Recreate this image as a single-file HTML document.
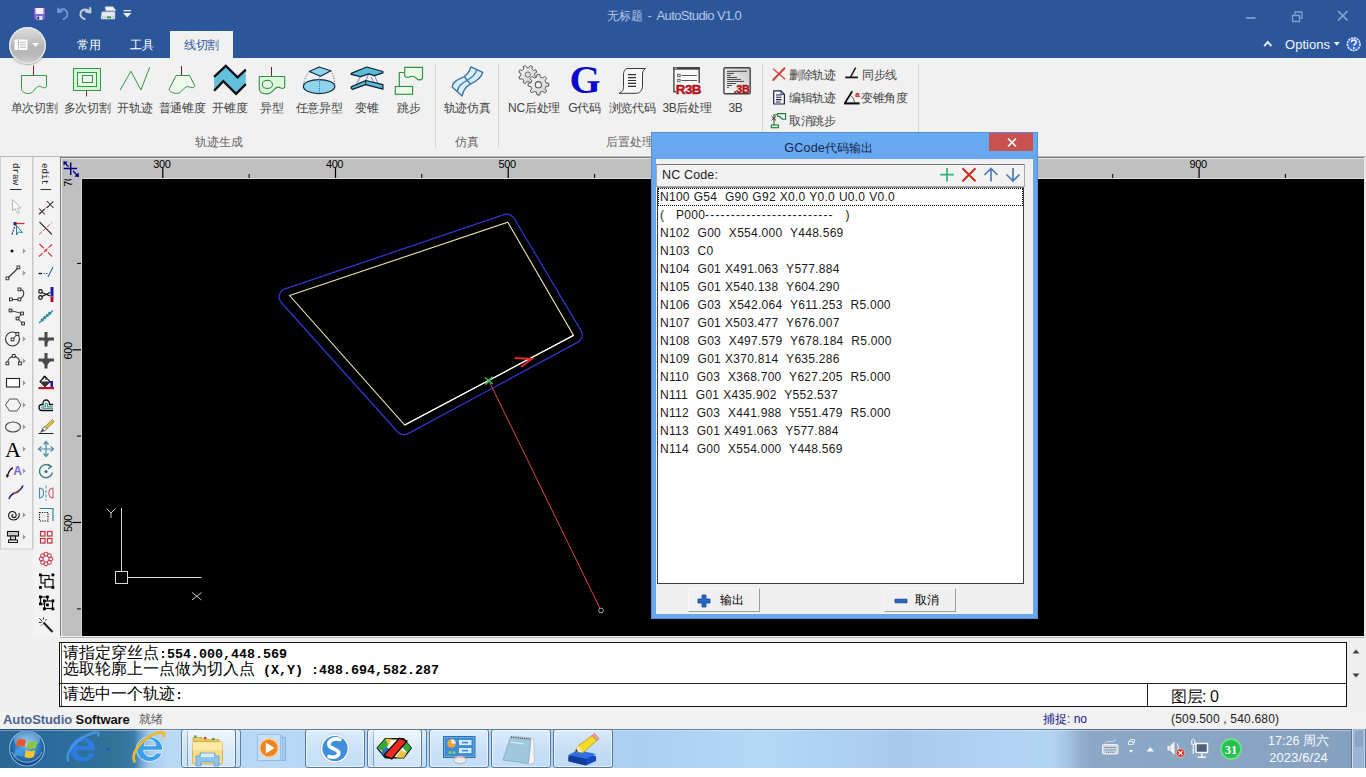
<!DOCTYPE html>
<html lang="zh">
<head>
<meta charset="utf-8">
<title>AutoStudio V1.0</title>
<style>
*{box-sizing:border-box;margin:0;padding:0}
html,body{width:1366px;height:777px;overflow:hidden;background:#fff}
body{font-family:"Liberation Sans",sans-serif;font-size:12px;color:#444;position:relative}
.abs{position:absolute}
#titlebar{left:0;top:0;width:1366px;height:58px;background:#2b579a}
#ribbon{left:0;top:58px;width:1366px;height:98px;background:#f1f1f1}
#ribbonline{left:0;top:156px;width:1366px;height:1px;background:#b8b8b8}
.tab{position:absolute;top:31px;height:27px;line-height:29px;font-size:12px;letter-spacing:-0.4px;color:#fff;text-align:center}
.tab.act{background:#f1f1f1;color:#2b579a}
.big{position:absolute;text-align:center;font-size:12px;color:#444;white-space:nowrap;transform:translateX(-50%);line-height:16px;letter-spacing:-0.3px}
.big svg{display:block;margin:0 auto;width:34px;height:34px}
.big span{display:block;margin-top:1px;line-height:16px;letter-spacing:-0.3px}
.grp{position:absolute;top:134px;font-size:12px;color:#666;transform:translateX(-50%);white-space:nowrap;line-height:16px}
.sep{position:absolute;top:64px;width:1px;height:84px;background:#d6d6d6}
.sm{position:absolute;font-size:12px;color:#444;white-space:nowrap;line-height:16px;letter-spacing:-0.3px}
#lefttb{left:0;top:157px;width:60px;height:551px;background:#f0f0f0}
#canvas{left:82px;top:179px;width:1282px;height:457px;background:#000}
#hruler{left:62px;top:159px;width:1302px;height:20px;background:#c0c0c0}
#vruler{left:62px;top:159px;width:20px;height:477px;background:#c0c0c0}
.rt{position:absolute;font-size:11px;color:#000;line-height:12px}
#cmd{left:59px;top:642px;width:1288px;height:65px;background:#fff;border:1px solid #111}
.cl{position:absolute;left:3px;font-size:16px;line-height:16px;color:#000;white-space:nowrap;height:17px}
.jw{display:inline-block;vertical-align:top;text-align:justify;text-align-last:justify;text-justify:inter-character;white-space:nowrap;overflow:visible}
.cl b{font-family:"Liberation Mono",monospace;font-size:13.330px;font-weight:bold;letter-spacing:0;vertical-align:0.500px}
#status{left:0;top:708px;width:1366px;height:21px;background:#f1f1f1}
#taskbar{left:0;top:729px;width:1366px;height:39px}
#dlg{left:651px;top:132px;width:387px;height:487px;background:#68a8ee;box-shadow:0 0 0 1px rgba(70,120,190,.5) inset}
.li{height:18px;line-height:18px;letter-spacing:0.27px;word-spacing:0.3px}
.btn{position:absolute;width:72px;height:24px;background:#f0f0f0;border:1px solid #f8f8f8;border-right-color:#9d9d9d;border-bottom-color:#9d9d9d}
.btn span{position:absolute;top:4px;font-size:12px;line-height:15px;color:#000;white-space:nowrap}
</style>
</head>
<body>
<div id="titlebar" class="abs">
<!-- quick access -->
<svg class="abs" style="left:32px;top:5px" width="104" height="18" viewBox="0 0 104 18">
 <g>
  <rect x="1.5" y="2.5" width="12" height="12" fill="#7868cc" stroke="#4a3f9e"/>
  <rect x="3.5" y="3" width="8" height="6" fill="#eef0ff"/>
  <rect x="4.5" y="11" width="6" height="4" fill="#d9dcf5"/>
  <rect x="5.2" y="11.6" width="2" height="3" fill="#3b2f86"/>
 </g>
 <path d="M26 7.200 l0.300 -3.800 M26 7.200 l4 -0.800 M26.300 6.800 c2.300 -3.600 7.300 -3.400 8.800 .3 c1.200 3.200 -.8 5.800 -3.600 7" fill="none" stroke="#6f9bd6" stroke-width="1.700" stroke-linecap="round"/>
 <path d="M58.500 7.500 l-.3 -4.500 M58.500 7.500 l-4.800 -1 M57.800 6.800 c-2.300 -3.300 -7.600 -3.200 -9 .5 c-1.200 3.200 .8 5.600 3.800 6.700" fill="none" stroke="#c4ccd8" stroke-width="2" stroke-linecap="round"/>
 <g transform="translate(-1,-1.200)">
  <path d="M74 3 l8 0 l3 4 l-10 0 z" fill="#f4f6fa" stroke="#b8c2d6" stroke-width=".6"/>
  <path d="M71 8 l13 0 l0 6 l-14 0 z" fill="#e8ebf2" stroke="#aab3c6" stroke-width=".6"/>
  <path d="M70 12 l14 0 l0 3.5 l-14 0 z" fill="#cfd5e2"/>
  <rect x="76" y="12.5" width="4" height="2" fill="#2db34a"/>
 </g>
 <path d="M91.500 5.700 l7.500 0" stroke="#e9eef8" stroke-width="1.300"/><path d="M91 8 l8.500 0 l-4.250 4.600 z" fill="#e9eef8"/>
</svg>
<div class="abs" style="left:607px;top:7px;font-size:12px;line-height:18px;color:#b4c6e6;white-space:nowrap"><span class="jw" style="width:36px;height:18px">无标题</span><span style="display:inline-block;width:13.500px;text-align:center;vertical-align:top">-</span><span style="font-size:13px;letter-spacing:-0.62px">AutoStudio V1.0</span></div>
<!-- window controls -->
<svg class="abs" style="left:1240px;top:6px" width="116" height="20" viewBox="0 0 116 20">
 <path d="M6 12 l9.5 0" stroke="#86a7d8" stroke-width="1.6"/>
 <path d="M52.5 9.5 l7 0 l0 6 l-7 0 z M55 9 l0 -3 l7 0 l0 6 l-2.5 0" fill="none" stroke="#7d9fd2" stroke-width="1.3"/>
 <path d="M98 5 l9.5 9.5 M107.5 5 l-9.5 9.5" stroke="#86a7d8" stroke-width="1.7"/>
</svg>
<svg class="abs" style="left:1262px;top:38px" width="12" height="12" viewBox="0 0 12 12"><path d="M2.2 8 l3.6 -4 l3.6 4" fill="none" stroke="#dfe7f4" stroke-width="2"/></svg>
<div class="abs" style="left:1285px;top:37px;font-size:13px;line-height:16px;color:#f2f5fb;letter-spacing:0.05px">Options</div>
<svg class="abs" style="left:1333px;top:40px" width="8" height="8" viewBox="0 0 8 8"><path d="M0.8 2 l6 0 l-3 3.8 z" fill="#eef2fa"/></svg>
<svg class="abs" style="left:1345px;top:36px" width="18" height="17" viewBox="0 0 18 17">
 <circle cx="8.7" cy="8.2" r="6.3" fill="#3a66c9" stroke="#d8e6fa" stroke-width="1.6" stroke-dasharray="2.2 .7"/>
 <path d="M6.4 6.3 c0 -3 4.8 -3 4.8 -0.2 c0 1.8 -2.3 1.8 -2.3 3.7" fill="none" stroke="#fff" stroke-width="1.5"/><circle cx="8.9" cy="12" r="0.95" fill="#fff"/>
</svg>
<div class="tab" style="left:70px;width:38px">常用</div>
<div class="tab" style="left:123px;width:38px">工具</div>
<div class="tab act" style="left:170px;width:63px">线切割</div>
</div>
<div id="ribbon" class="abs"></div>
<div id="ribbonline" class="abs"></div>
<div id="rb" class="abs" style="left:0;top:0;width:1366px;height:156px">
<!-- app button -->
<div class="abs" style="left:9px;top:27px;width:37px;height:37px;border-radius:50%;background:linear-gradient(#dcdcdc 0%,#c9c9c9 30%,#b4b4b4 55%,#b9b9b9 75%,#d0d0d0 100%);box-shadow:0 1px 2px rgba(0,0,0,.3), inset 0 0 0 1.500px rgba(226,232,240,.9)"></div>
<svg class="abs" style="left:13px;top:38px" width="30" height="14" viewBox="0 0 30 14">
 <rect x="1.5" y="1.5" width="13" height="10.5" rx="1" fill="#fff" opacity=".95"/>
 <path d="M5.5 2 l0 9.5 M7 4.3 l6 0 M7 6.8 l6 0 M7 9.3 l6 0" stroke="#bdbdbd" stroke-width="1"/>
 <path d="M19 5 l7 0 l-3.5 4 z" fill="#f6f6f6"/>
</svg>

<svg class="abs" style="left:0;top:58px" width="930" height="98" viewBox="0 58 930 98">
<!-- 1 single cut -->
<path d="M33.500 65.500 L33.500 75.500" stroke="#9c1a2a" stroke-width="1"/>
<path d="M21.500 75.500 L46.500 75.500 L46.500 86.600 C45 88.300 43 88.200 41.500 87 C39.800 85.600 37.800 86 36 88 C33.500 91 32 93.500 28.600 93.500 C24.500 93.500 21.500 91.500 21.500 88.500 Z" fill="none" stroke="#319848" stroke-width="1"/>
<!-- 2 multi cut -->
<rect x="73.500" y="68.500" width="27" height="22" fill="#d6f8d6" stroke="#319848"/>
<rect x="77.500" y="72.500" width="19" height="14" fill="#e6fbe6" stroke="#319848"/>
<rect x="82.500" y="75.500" width="10" height="7" fill="#f1f1f1" stroke="#319848"/>
<path d="M86.500 91 L86.500 96.500" stroke="#9c1a2a"/>
<!-- 3 open path -->
<path d="M120.2 90 L130.9 71.2 L140.9 90 L149.7 67.2" fill="none" stroke="#319848" stroke-width="1"/>
<!-- 4 taper -->
<path d="M181.500 66 L181.500 75.500" stroke="#6a2428"/>
<path d="M176.100 75.500 L189.500 75.500 L194.600 85.300 C194.800 87.800 192.500 88.200 190.500 87.300 C188.300 86.200 186.500 86.300 184.500 88 C181.800 90.500 180.500 93.400 176.800 93.400 C172.500 93.400 169 91.300 169.300 88.800 Z" fill="#eefcee" stroke="#3a8a4a" stroke-width="1"/>
<!-- 5 open taper -->
<path d="M214.100 76.900 L225.800 65.600 L237.600 77.400 L245.800 69.700 L245.800 84.100 L236.100 93.800 L223.300 81 L214.100 90.700 Z" fill="#62c0dc"/>
<path d="M214.100 76.900 L225.800 65.800 L237.600 77.400 L245.800 69.700" fill="none" stroke="#0c0c10" stroke-width="2.300" stroke-linejoin="miter"/>
<path d="M214.100 90.700 L223.300 81.200 L236.100 93.800 L245.800 84.100" fill="none" stroke="#0c0c10" stroke-width="2.300"/>
<!-- 6 special -->
<path d="M271.500 67 L271.500 76" stroke="#6a2428"/>
<path d="M259.300 76.500 L284.700 76.500 L284.700 87 C283.800 88.800 281.800 88.900 280.300 87.800 C278.500 86.600 276.500 87 274.500 89.200 C272 92 270.500 93.900 267 93.900 C262.500 93.900 259.300 92 259.300 89 Z" fill="#dcf9dc" stroke="#3a8a4a" stroke-width="1.100"/>
<ellipse cx="267.400" cy="84.400" rx="5.100" ry="4" fill="#e8fbe8" stroke="#3a8a4a" stroke-width="1.100"/>
<!-- 7 any special -->
<ellipse cx="319.100" cy="86.500" rx="15.700" ry="7" fill="#8fd4ec" stroke="#0e2c44" stroke-width="1.250"/>
<path d="M309.300 71.500 L319.100 67 L330.900 70.800 L320.600 76.200 Z" fill="#8fd4ec" stroke="#0e2c44" stroke-width="1.200" stroke-linejoin="round"/>
<path d="M309.300 71.500 C306 75.500 304.200 80 303.600 84 M330.900 70.800 C333.500 75 334.600 80 334.800 84" fill="none" stroke="#3a4a5a" stroke-width=".9" stroke-dasharray="1 1.600"/>
<path d="M319.500 76.500 L319.500 93.500" fill="none" stroke="#2f62c0" stroke-width=".9" stroke-dasharray="1.200 1.100"/>
<!-- 8 var taper -->
<path d="M356.500 83.600 L360.600 76.400 M365.700 80.500 L368.800 73.800 M374.400 75.400 L378 83.400 M371 77 L374 82.500" stroke="#5a5ac8" stroke-width=".8"/>
<path d="M351.200 73.300 L366.700 67 L382.900 71.500 L382.900 72.800 L374.400 75.600 L368.800 73.900 L360.600 76.600 L351.200 74.400 Z" fill="#5bbcd8" stroke="#0c2230" stroke-width="1.250" stroke-linejoin="round"/>
<path d="M351.200 86.900 L365.700 80.500 L382.900 84.600 L382.900 89.200 L365.700 84.700 L352.400 89.300 L351.200 88.300 Z" fill="#5bbcd8" stroke="#0c2230" stroke-width="1.250" stroke-linejoin="round"/>
<path d="M365.700 80.500 L365.700 84.700" stroke="#0c2230" stroke-width="1"/>
<!-- 9 jump -->
<path d="M404.700 67.400 L422.500 67.400 L422.500 78.500 C420.800 80.300 418.300 80.300 416.500 78.500 C414.500 76.300 412 75.800 409.800 76.800 C407.500 77.800 404.700 77.500 404.700 75.500 Z" fill="#eafbea" stroke="#2f9240" stroke-width="1.150" stroke-linejoin="round"/>
<path d="M404.700 72.500 L399.300 72.500 L399.300 86.500" fill="none" stroke="#2f9240" stroke-width="1.150"/>
<rect x="395.300" y="86.500" width="17.300" height="7.800" fill="#eafbea" stroke="#2f9240" stroke-width="1.150"/>
<!-- 10 simulate -->
<path d="M452.400 87.300 C452 81 460 79 464.200 76.500 C468 74 469.500 71 470.900 66.900 L482.700 72.400 C481.500 77.500 477 81 470.400 84.200 C465 87 463 91 462.100 96 Z" fill="#d4f1fd" stroke="#44719f" stroke-width="1.400" stroke-linejoin="round"/>
<path d="M476.800 69.600 C475.500 74.500 472 77.500 467.300 80.300 C461.500 83.500 458 86 457.300 91.600 M464.200 76.500 L470.400 84.200" fill="none" stroke="#44719f" stroke-width="1.300"/>
<!-- 11 gears -->
<defs><linearGradient id="gg" x1="0" y1="0" x2="1" y2="1"><stop offset="0" stop-color="#fafafa"/><stop offset="1" stop-color="#cfcfcf"/></linearGradient></defs>
<path d="M534.62 75.68 L536.79 76.98 L535.84 79.27 L533.38 78.66 L531.86 80.18 L532.47 82.64 L530.18 83.59 L528.88 81.42 L526.72 81.42 L525.42 83.59 L523.13 82.64 L523.74 80.18 L522.22 78.66 L519.76 79.27 L518.81 76.98 L520.98 75.68 L520.98 73.52 L518.81 72.22 L519.76 69.93 L522.22 70.54 L523.74 69.02 L523.13 66.56 L525.42 65.61 L526.72 67.78 L528.88 67.78 L530.18 65.61 L532.47 66.56 L531.86 69.02 L533.38 70.54 L535.84 69.93 L536.79 72.22 L534.62 73.52 Z" fill="url(#gg)" stroke="#5c5c5c" stroke-width="1" stroke-linejoin="round"/>
<circle cx="527.800" cy="74.600" r="2.600" fill="#e4e4e4" stroke="#6a6a6a" stroke-width="1"/>
<path d="M545.98 82.88 L548.71 83.32 L548.71 86.08 L545.98 86.52 L545.05 88.78 L546.67 91.01 L544.71 92.97 L542.48 91.35 L540.22 92.28 L539.78 95.01 L537.02 95.01 L536.58 92.28 L534.32 91.35 L532.09 92.97 L530.13 91.01 L531.75 88.78 L530.82 86.52 L528.09 86.08 L528.09 83.32 L530.82 82.88 L531.75 80.62 L530.13 78.39 L532.09 76.43 L534.32 78.05 L536.58 77.12 L537.02 74.39 L539.78 74.39 L540.22 77.12 L542.48 78.05 L544.71 76.43 L546.67 78.39 L545.05 80.62 Z" fill="url(#gg)" stroke="#555" stroke-width="1" stroke-linejoin="round"/>
<circle cx="538.400" cy="84.700" r="3.100" fill="#f4f4f4" stroke="#5a5a5a" stroke-width="1.100"/>
<!-- 12 G -->
<text x="585" y="93.300" font-family="Liberation Serif" font-weight="bold" font-size="40" fill="#0a0acd" text-anchor="middle">G</text>
<!-- 13 scroll -->
<path d="M628 68.5 L645.5 68.5 C643 70 642.5 72 642.5 75 L642.5 86 C642.5 90 640 93.3 636 93.3 L619 93.3 C622.5 92 623.5 90 623.5 86.5 L623.5 75 C623.5 71 625 68.5 628 68.5 Z" fill="#f8f8f8" stroke="#3a3a3a" stroke-width="1"/>
<path d="M628 74.600 L636 74.600 M628 77.600 L636 77.600 M628 80.500 L636 80.500 M628 83.400 L636 83.400 M628 86.300 L636 86.300" stroke="#333" stroke-width="1.200"/>
<!-- 14 R3B -->
<defs><linearGradient id="g3b" x1="1" y1="0" x2="0" y2="1"><stop offset="0" stop-color="#c4c4c4"/><stop offset=".55" stop-color="#e6e6e6"/><stop offset="1" stop-color="#fbfbfb"/></linearGradient></defs>
<path d="M673.900 91.800 L673.900 67.800 L699.200 67.800 L699.200 83" fill="#fafafa" stroke="#444" stroke-width="1.400"/>
<rect x="673.200" y="67.100" width="26.700" height="2.600" fill="#444"/>
<rect x="674.600" y="67.700" width="2.400" height="0.900" fill="#e8e8e8"/>
<rect x="677.700" y="74.300" width="2.400" height="2.400" fill="#fff" stroke="#555" stroke-width=".9"/><rect x="677.700" y="79.300" width="2.400" height="2.400" fill="#fff" stroke="#555" stroke-width=".9"/>
<path d="M681.500 75.500 L697 75.500 M681.500 80.500 L697 80.500" stroke="#5a5a5a" stroke-width="1.100"/>
<path d="M673.200 91.800 L676 91.800" stroke="#444" stroke-width="1.400"/>
<text x="688.400" y="93.700" font-weight="bold" font-size="13.400" fill="#b5141c" stroke="#b5141c" stroke-width=".5" text-anchor="middle" letter-spacing="-0.500">R3B</text>
<!-- 15 .3B -->
<rect x="723.900" y="67.800" width="26.300" height="26" rx="1.200" fill="url(#g3b)" stroke="#444" stroke-width="1.400"/>
<rect x="726.900" y="70.8" width="20" height="1.050" fill="#4a4a4a"/><rect x="726.900" y="72.9" width="7" height="1.050" fill="#4a4a4a"/><rect x="726.900" y="74.9" width="4" height="1.050" fill="#4a4a4a"/><rect x="726.900" y="76.9" width="10" height="1.050" fill="#4a4a4a"/><rect x="726.900" y="78.9" width="14" height="1.050" fill="#4a4a4a"/><rect x="726.900" y="80.9" width="17" height="1.050" fill="#4a4a4a"/><rect x="726.900" y="83.0" width="9" height="1.050" fill="#4a4a4a"/><rect x="726.900" y="85.0" width="5" height="1.050" fill="#4a4a4a"/><rect x="726.900" y="87.0" width="2" height="1.050" fill="#4a4a4a"/>
<text x="741.600" y="92.700" font-weight="bold" font-size="10.800" fill="#ae1019" stroke="#ae1019" stroke-width=".35" text-anchor="middle" letter-spacing="-0.300">.3B</text>
<!-- small icons -->
<path d="M784.500 68.300 L773.200 80" stroke="#c9473a" stroke-width="2" stroke-linecap="round"/><path d="M773 68.800 L785.300 79.300" stroke="#c9473a" stroke-width="1.200"/>
<path d="M845.200 77.400 L857.800 77.400" stroke="#151515" stroke-width="1.800"/><path d="M850.600 77 L855.600 67.600" stroke="#151515" stroke-width="1.500"/>
<path d="M773.700 90.900 L781 90.900 L784.400 94.300 L784.400 104 L773.700 104 Z" fill="#fbfaf0" stroke="#1c1c5c" stroke-width="1.200" stroke-linejoin="round"/>
<path d="M781 90.900 L781 94.300 L784.400 94.300" fill="none" stroke="#1c1c5c" stroke-width=".9"/>
<path d="M776 95 L781.500 95 M776 97.300 L781.500 97.300 M776 99.600 L781.500 99.600 M776 101.900 L780.500 101.900" stroke="#1c1c5c" stroke-width="1.050"/>
<path d="M844.100 103.400 L859.600 103.400" stroke="#0c0c0c" stroke-width="2.100"/><path d="M844.800 103.200 L852.200 91.200" stroke="#0c0c0c" stroke-width="1.700"/>
<path d="M850.500 95.500 C853.500 97.500 854.500 100 854.300 102.500" stroke="#333" stroke-width=".8" fill="none"/>
<text x="857.400" y="97" font-weight="bold" font-size="8" fill="#d22f25" stroke="#d22f25" stroke-width=".3" text-anchor="middle">a</text>
<path d="M777.600 113.600 L785.600 113.600 L785.600 119.200 L782.600 119.200 L779.200 116.200 L777.600 116.200 Z" fill="#eefaf0" stroke="#1f7a3a" stroke-width="1.150" stroke-linejoin="round"/>
<path d="M777.600 114.800 L774 114.800 L774 125" stroke="#1f7a3a" stroke-width="1.100" fill="none"/>
<rect x="771.400" y="125" width="7" height="2.700" fill="#eefaf0" stroke="#1f7a3a" stroke-width="1.100"/>
<path d="M771.600 116.300 L776 120.400 M776 116.300 L771.600 120.400" stroke="#3a1418" stroke-width=".9"/>
</svg>
<div class="big" style="left:34px;top:99px"><span class="jw" style="width:46.8px">单次切割</span></div>
<div class="big" style="left:87px;top:99px"><span class="jw" style="width:46.8px">多次切割</span></div>
<div class="big" style="left:135px;top:99px"><span class="jw" style="width:35.1px">开轨迹</span></div>
<div class="big" style="left:182px;top:99px"><span class="jw" style="width:46.8px">普通锥度</span></div>
<div class="big" style="left:230px;top:99px"><span class="jw" style="width:35.1px">开锥度</span></div>
<div class="big" style="left:272px;top:99px"><span class="jw" style="width:23.4px">异型</span></div>
<div class="big" style="left:319px;top:99px"><span class="jw" style="width:46.8px">任意异型</span></div>
<div class="big" style="left:367px;top:99px"><span class="jw" style="width:23.4px">变锥</span></div>
<div class="big" style="left:409px;top:99px"><span class="jw" style="width:23.4px">跳步</span></div>
<div class="big" style="left:467px;top:99px"><span class="jw" style="width:46.8px">轨迹仿真</span></div>
<div class="big" style="left:534px;top:100px">NC后处理</div>
<div class="big" style="left:584.500px;top:100px">G代码</div>
<div class="big" style="left:632px;top:99px"><span class="jw" style="width:46.8px">浏览代码</span></div>
<div class="big" style="left:687px;top:100px">3B后处理</div>
<div class="big" style="left:735.500px;top:100px">3B</div>
<div class="sep" style="left:435px"></div>
<div class="sep" style="left:498px"></div>
<div class="sep" style="left:762px"></div>
<div class="sep" style="left:918px"></div>
<div class="grp" style="left:218px"><span class="jw" style="width:46.8px">轨迹生成</span></div>
<div class="grp" style="left:467px"><span class="jw" style="width:23.4px">仿真</span></div>
<div class="grp" style="left:629px"><span class="jw" style="width:46.8px">后置处理</span></div>
<div class="sm" style="left:789px;top:67px"><span class="jw" style="width:46.8px">删除轨迹</span></div>
<div class="sm" style="left:862px;top:67px"><span class="jw" style="width:35.1px">同步线</span></div>
<div class="sm" style="left:789px;top:90px"><span class="jw" style="width:46.8px">编辑轨迹</span></div>
<div class="sm" style="left:861px;top:90px"><span class="jw" style="width:46.8px">变锥角度</span></div>
<div class="sm" style="left:789px;top:113px"><span class="jw" style="width:46.8px">取消跳步</span></div>
</div>
<div id="lefttb" class="abs"></div>
<svg class="abs" style="left:0;top:157px" width="60" height="482" viewBox="0 157 60 482" font-family="Liberation Mono, monospace">
<rect x="0" y="157" width="33" height="392" fill="#f3f3f3"/><rect x="0" y="157" width="1" height="392" fill="#d0d0d0"/><rect x="32" y="157" width="1.500" height="392" fill="#c9c9c9"/><rect x="0" y="548.500" width="33" height="1" fill="#cfcfcf"/>
<rect x="34" y="157" width="25.500" height="480" fill="#f3f3f3"/><rect x="34" y="636.500" width="26" height="1" fill="#cfcfcf"/>
<text transform="translate(12.500,163) rotate(90)" font-size="9.500" fill="#222" textLength="22" lengthAdjust="spacingAndGlyphs">draw</text>
<text transform="translate(42,163) rotate(90)" font-size="9.500" fill="#222" textLength="22" lengthAdjust="spacingAndGlyphs">edit</text>
<path d="M10 189.500 L21.500 189.500 M40.500 189.500 L51 189.500" stroke="#333" stroke-width="1"/>
<path d="M22.800 248.2 L25.800 251 L22.800 253.8 Z" fill="#9a9a9a"/>
<path d="M22.800 270.2 L25.800 273 L22.800 275.8 Z" fill="#9a9a9a"/>
<path d="M22.800 336.2 L25.800 339 L22.800 341.8 Z" fill="#9a9a9a"/>
<path d="M22.800 358.2 L25.800 361 L22.800 363.8 Z" fill="#9a9a9a"/>
<path d="M22.800 380.2 L25.800 383 L22.800 385.8 Z" fill="#9a9a9a"/>
<path d="M22.800 402.2 L25.800 405 L22.800 407.8 Z" fill="#9a9a9a"/>
<path d="M22.800 424.2 L25.800 427 L22.800 429.8 Z" fill="#9a9a9a"/>
<path d="M22.800 446.2 L25.800 449 L22.800 451.8 Z" fill="#9a9a9a"/>
<path d="M22.800 468.2 L25.800 471 L22.800 473.8 Z" fill="#9a9a9a"/>
<path d="M22.800 512.2 L25.800 515 L22.800 517.8 Z" fill="#9a9a9a"/>
<path d="M22.800 534.2 L25.800 537 L22.800 539.8 Z" fill="#9a9a9a"/>
<path d="M12.500 199.5 L12.500 211 L15 208.5 L17.500 213.5 L19.500 212.5 L17 208 L21 208 Z" fill="#fbfbfb" stroke="#b9b9b9" stroke-width="1"/>
<path d="M15 223.5 L24.500 223.5" stroke="#d83030" stroke-width="1.300"/><path d="M15.500 224 L12 234.5" stroke="#2a2a90" stroke-width="1.200" stroke-dasharray="2 1"/><rect x="13.500" y="222" width="3" height="3" fill="#2a2a90"/><path d="M16.500 225.5 L22.500 232.5 L18.500 232 L16.500 235 Z" fill="#e8f6f6" stroke="#2a8080" stroke-width="1"/>
<path d="M12 249.2 l1.800 1.800 l-1.800 1.800 l-1.800 -1.800 z" fill="#000"/>
<path d="M8 278 L18 268" stroke="#333" stroke-width="1.100"/><rect x="6" y="277" width="2.800" height="2.800" fill="#fff" stroke="#222" stroke-width=".9"/><rect x="17" y="266" width="2.800" height="2.800" fill="#fff" stroke="#222" stroke-width=".9"/>
<path d="M11 299.5 L19 299.5 C26 296 24.500 289 19.500 289.5" fill="none" stroke="#333" stroke-width="1.100"/><rect x="9.500" y="298" width="2.800" height="2.800" fill="#fff" stroke="#222" stroke-width=".9"/><rect x="18" y="298" width="2.800" height="2.800" fill="#fff" stroke="#222" stroke-width=".9"/><rect x="18" y="288" width="2.800" height="2.800" fill="#fff" stroke="#222" stroke-width=".9"/>
<path d="M10.500 310.5 L22 313.5 L17.500 318.5 L23 323.5" fill="none" stroke="#444" stroke-width="1"/>
<rect x="9.1" y="309.1" width="2.800" height="2.800" fill="#ddd" stroke="#222" stroke-width=".9"/>
<rect x="20.6" y="312.1" width="2.800" height="2.800" fill="#ddd" stroke="#222" stroke-width=".9"/>
<rect x="16.1" y="317.1" width="2.800" height="2.800" fill="#ddd" stroke="#222" stroke-width=".9"/>
<rect x="21.6" y="322.1" width="2.800" height="2.800" fill="#ddd" stroke="#222" stroke-width=".9"/>
<circle cx="12.500" cy="339" r="7" fill="none" stroke="#333" stroke-width="1.100"/><path d="M12.500 339.5 L17.500 334" stroke="#333" stroke-width="1"/><rect x="11.100" y="338.1" width="2.800" height="2.800" fill="#fff" stroke="#222" stroke-width=".9"/><rect x="16" y="332.5" width="2.800" height="2.800" fill="#fff" stroke="#222" stroke-width=".9"/>
<path d="M7.500 363.5 C8 354 19.500 354 20 363.5" fill="none" stroke="#333" stroke-width="1.200"/><rect x="6" y="362" width="2.800" height="2.800" fill="#fff" stroke="#222" stroke-width=".9"/><rect x="18.500" y="362" width="2.800" height="2.800" fill="#fff" stroke="#222" stroke-width=".9"/><rect x="12.300" y="354.5" width="2.800" height="2.800" fill="#fff" stroke="#222" stroke-width=".9"/>
<rect x="6.500" y="378.5" width="13" height="8.500" fill="#fff" stroke="#222" stroke-width="1.100"/>
<path d="M5.500 405 L9.500 399 L17 399 L21 405 L17 411 L9.500 411 Z" fill="none" stroke="#555" stroke-width="1"/>
<ellipse cx="13" cy="427" rx="7.500" ry="5" fill="none" stroke="#444" stroke-width="1.100"/>
<text x="13" y="456.5" font-family="Liberation Serif, serif" font-size="22" fill="#000" text-anchor="middle">A</text>
<text x="17.500" y="475" font-family="Liberation Sans, sans-serif" font-weight="bold" font-size="12" fill="#7a6ad0" text-anchor="middle">A</text><path d="M13 468 C9.500 468.5 8.500 473 7 476.5" fill="none" stroke="#111" stroke-width="1.300"/><path d="M5.800 474.5 L7 478 L9.300 475.5 Z" fill="#111"/>
<path d="M9 499 C12 489.500 18.500 496 23 485.500" fill="none" stroke="#1c1c8c" stroke-width="1.600"/><path d="M13.200 493.300 C15 492.800 16.500 492.800 18.500 492" fill="none" stroke="#d04040" stroke-width="1.600"/>
<path d="M13.500 515 c-1.500 -1 -2.500 1 -1 2 c2 1.500 4.500 -.5 3.500 -3 c-1 -3 -5.500 -3.500 -7 -.5 c-1.500 3.500 1 6.500 4.500 6.500 c4 0 6.500 -3.500 5.500 -7" fill="none" stroke="#111" stroke-width="1.100"/>
<rect x="7.500" y="531.5" width="11" height="4.500" fill="#ccc" stroke="#111" stroke-width="1.100"/><rect x="10.500" y="536" width="5" height="4" fill="#ccc" stroke="#111"/><rect x="8.500" y="540" width="9" height="2.500" fill="#eee" stroke="#111"/>
<path d="M38.500 214 L53 202" stroke="#d05050" stroke-width="1" stroke-dasharray="3 1.500"/><path d="M46.800 201 L53.600 208 M53.300 201.300 L47 207.800 M39 208.500 L45 214.500 M44.800 208.800 L39.300 214.300" stroke="#333" stroke-width="1.050"/>
<path d="M39 234.5 L52 222.5" stroke="#d05050" stroke-width="1" stroke-dasharray="4 1.500"/><path d="M39.500 222 L52 234.5" stroke="#333" stroke-width="1.100"/>
<path d="M39 256.5 L52 244.5" stroke="#d03030" stroke-width="1.100" stroke-dasharray="5 1.500"/><path d="M39.500 244 L52 256.5" stroke="#d03030" stroke-width="1.100" stroke-dasharray="6 1.500 3 1.500"/>
<path d="M38.500 273.5 L42 273.5" stroke="#111" stroke-width="1.300"/><path d="M43.500 273.5 L48 273.5" stroke="#2a7090" stroke-width="1" stroke-dasharray="1.500 1"/><path d="M48 277 L53 267" stroke="#2a7090" stroke-width="1.100"/>
<rect x="50.500" y="287" width="3" height="9.500" fill="#1a1ab0"/><rect x="50.500" y="296.5" width="3" height="5.500" fill="#b01030"/><circle cx="40.500" cy="291.5" r="1.800" fill="none" stroke="#111" stroke-width="1.200"/><circle cx="40.500" cy="297.5" r="1.800" fill="none" stroke="#111" stroke-width="1.200"/><path d="M42 292.5 L50 296 M42 296.5 L50 292.5" stroke="#111" stroke-width="1.300"/>
<path d="M39 323 L53 310.5" stroke="#2a8aa0" stroke-width="1.400"/><path d="M41.500 320.5 L51 312.2" stroke="#2a8aa0" stroke-width="3.200" stroke-dasharray="2 1.300"/>
<path d="M38.500 339 L54 339 M46 332 L46 346.5" stroke="#4a4a4a" stroke-width="3"/><path d="M46 340.5 L49.500 340.5 L46 344" fill="#4a4a4a"/>
<path d="M38.500 360 L54 360 M46 353 L46 368.5" stroke="#4a4a4a" stroke-width="3"/><path d="M41.500 361 L50.500 361 L46 366.5 Z" fill="#4a4a4a"/>
<rect x="38.500" y="387" width="15.500" height="2.200" fill="#c01028"/><path d="M49.500 381 L53 381 L53 387 L50.500 387 L50.500 383.5" fill="#1a1ab0"/><path d="M40 381.5 L45 376.5 L50 381.5 L45 386.5 Z" fill="#f5f5f5" stroke="#111" stroke-width="1.100"/><path d="M40 381.5 L50 381.5 L45 386.5 Z" fill="#333"/><path d="M43 379 C42.500 375 46.500 375 46 380" fill="none" stroke="#111" stroke-width="1"/>
<path d="M42 410.5 C38 410.5 38 404.5 42 404.5 L43 404.5 C42 398.5 50 398.5 49.500 404.5 L53 404.5 M53 410.5 L42 410.5" fill="none" stroke="#111" stroke-width="1.300"/><path d="M42.500 408 C41 408 41 406.8 42.500 406.8 L45.500 406.8 C44 401.5 48 401.5 47.500 406.8 L53 406.8 M53 408.3 L42.500 408.3" fill="none" stroke="#2a8a80" stroke-width="1"/>
<path d="M38.500 433.5 L53.500 433.5" stroke="#222" stroke-width="1"/><path d="M52.500 419.5 L54 422 L47 428.5 L45 426.5 Z" fill="#d8c040" stroke="#8a7a20" stroke-width=".7"/><path d="M45 426.5 L47 428.5 L44.500 431 L42 429 Z" fill="#e8e8e8" stroke="#555" stroke-width=".8"/><path d="M42 429 L44.500 431 L40 433 Z" fill="#555"/>
<path d="M46 442 L46 456 M39 449 L53 449" stroke="#4a8aa8" stroke-width="1.200"/><path d="M43.500 444.5 L46 441.5 L48.500 444.5 M43.500 453.5 L46 456.5 L48.500 453.5 M41.500 446.5 L38.500 449 L41.500 451.5 M50.500 446.5 L53.500 449 L50.500 451.5" fill="none" stroke="#4a8aa8" stroke-width="1.200"/>
<path d="M50.500 466.5 A6.500 6.500 0 1 0 52.300 472.5" fill="none" stroke="#3a7a80" stroke-width="1.300"/><path d="M47.500 464 L51.500 466.5 L48 469" fill="none" stroke="#3a7a80" stroke-width="1.200"/><circle cx="46" cy="471.5" r="1.500" fill="#2a6a70"/>
<path d="M46 485.5 L46 500.5" stroke="#4a90a8" stroke-width="1" stroke-dasharray="3 1.500"/><path d="M39.500 488 L39.500 498 C45 497.5 45 488.5 39.500 488 Z" fill="none" stroke="#4a90a8" stroke-width="1.100"/><path d="M53 488 L53 498 C47.500 497.5 47.500 488.5 53 488 Z" fill="none" stroke="#c06070" stroke-width="1.100"/>
<path d="M39.500 508.5 L53 508.5 L53 521" fill="none" stroke="#3a8a80" stroke-width="1.200"/><rect x="39.500" y="512.5" width="8.500" height="8.500" fill="none" stroke="#111" stroke-width="1.200" stroke-dasharray="1.200 1.200"/>
<rect x="40.5" y="531.5" width="4.500" height="4.500" fill="none" stroke="#c03040" stroke-width="1.200"/>
<rect x="47.5" y="531.5" width="4.500" height="4.500" fill="none" stroke="#c03040" stroke-width="1.200"/>
<rect x="40.5" y="538.5" width="4.500" height="4.500" fill="none" stroke="#c03040" stroke-width="1.200"/>
<rect x="47.5" y="538.5" width="4.500" height="4.500" fill="none" stroke="#c03040" stroke-width="1.200"/>
<circle cx="50.80" cy="559.00" r="2" fill="none" stroke="#c03040" stroke-width="1"/>
<circle cx="49.39" cy="562.39" r="2" fill="none" stroke="#c03040" stroke-width="1"/>
<circle cx="46.00" cy="563.80" r="2" fill="none" stroke="#c03040" stroke-width="1"/>
<circle cx="42.61" cy="562.39" r="2" fill="none" stroke="#c03040" stroke-width="1"/>
<circle cx="41.20" cy="559.00" r="2" fill="none" stroke="#c03040" stroke-width="1"/>
<circle cx="42.61" cy="555.61" r="2" fill="none" stroke="#c03040" stroke-width="1"/>
<circle cx="46.00" cy="554.20" r="2" fill="none" stroke="#c03040" stroke-width="1"/>
<circle cx="49.39" cy="555.61" r="2" fill="none" stroke="#c03040" stroke-width="1"/>
<rect x="41" y="575.5" width="8" height="7.500" fill="none" stroke="#111" stroke-width="1.200"/><rect x="45" y="579.5" width="8" height="7.500" fill="#f3f3f3" stroke="#111" stroke-width="1.200"/>
<rect x="39" y="573.5" width="2.800" height="2.800" fill="#000"/>
<rect x="51.5" y="573.5" width="2.800" height="2.800" fill="#000"/>
<rect x="39" y="586" width="2.800" height="2.800" fill="#000"/>
<rect x="51.5" y="586" width="2.800" height="2.800" fill="#000"/>
<rect x="40.500" y="597" width="7" height="7" fill="none" stroke="#111" stroke-width="1.200"/><rect x="44.500" y="601" width="8" height="7.500" fill="#f3f3f3" stroke="#111" stroke-width="1.200"/>
<rect x="39" y="595.5" width="2.800" height="2.800" fill="#000"/>
<rect x="46" y="595.5" width="2.800" height="2.800" fill="#000"/>
<rect x="39" y="602.5" width="2.800" height="2.800" fill="#000"/>
<rect x="46" y="603.5" width="2.800" height="2.800" fill="#000"/>
<rect x="43" y="599.5" width="2.800" height="2.800" fill="#000"/>
<rect x="51.5" y="599.5" width="2.800" height="2.800" fill="#000"/>
<rect x="43" y="607.5" width="2.800" height="2.800" fill="#000"/>
<rect x="51.5" y="607.5" width="2.800" height="2.800" fill="#000"/>
<path d="M43.500 622.5 L52.500 632" stroke="#222" stroke-width="2.200"/><path d="M39.500 618.5 L42.500 621.5 M43.500 617.5 L43.500 619.5 M39 622.5 L41.500 622.5 M46.500 619 L45.500 620.5 M41 625.5 L42 624.5" stroke="#222" stroke-width="1"/>
</svg>
<div id="hruler" class="abs"></div>
<div id="vruler" class="abs"></div>
<div id="canvas" class="abs"></div>
<svg class="abs" style="left:60px;top:157px" width="1306" height="481" viewBox="60 157 1306 481" font-family="Liberation Sans, sans-serif">
<rect x="60" y="157" width="1306" height="1" fill="#7c7c7c"/><rect x="60" y="157" width="1" height="480" fill="#7c7c7c"/>
<rect x="61" y="158" width="1305" height="1" fill="#e4e4e4"/><rect x="61" y="158" width="1" height="479" fill="#ececec"/>
<rect x="162.2" y="167.5" width="1.2" height="11.5" fill="#000"/>
<text x="161.8" y="168.3" font-size="11" text-anchor="middle" fill="#000" letter-spacing="-0.4">300</text>
<rect x="248.6" y="174" width="1" height="5" fill="#000"/>
<rect x="334.9" y="167.5" width="1.2" height="11.5" fill="#000"/>
<text x="334.5" y="168.3" font-size="11" text-anchor="middle" fill="#000" letter-spacing="-0.4">400</text>
<rect x="421.3" y="174" width="1" height="5" fill="#000"/>
<rect x="507.6" y="167.5" width="1.2" height="11.5" fill="#000"/>
<text x="507.2" y="168.3" font-size="11" text-anchor="middle" fill="#000" letter-spacing="-0.4">500</text>
<rect x="594.1" y="174" width="1" height="5" fill="#000"/>
<rect x="680.3" y="167.5" width="1.2" height="11.5" fill="#000"/>
<text x="679.9" y="168.3" font-size="11" text-anchor="middle" fill="#000" letter-spacing="-0.4">600</text>
<rect x="766.8" y="174" width="1" height="5" fill="#000"/>
<rect x="853.0" y="167.5" width="1.2" height="11.5" fill="#000"/>
<text x="852.6" y="168.3" font-size="11" text-anchor="middle" fill="#000" letter-spacing="-0.4">700</text>
<rect x="939.5" y="174" width="1" height="5" fill="#000"/>
<rect x="1025.8" y="167.5" width="1.2" height="11.5" fill="#000"/>
<text x="1025.4" y="168.3" font-size="11" text-anchor="middle" fill="#000" letter-spacing="-0.4">800</text>
<rect x="1112.2" y="174" width="1" height="5" fill="#000"/>
<rect x="1198.5" y="167.5" width="1.2" height="11.5" fill="#000"/>
<text x="1198.1" y="168.3" font-size="11" text-anchor="middle" fill="#000" letter-spacing="-0.4">900</text>
<rect x="1284.9" y="174" width="1" height="5" fill="#000"/>
<rect x="77" y="608.4" width="5" height="1" fill="#000"/>
<rect x="72.5" y="521.9" width="9.5" height="1.2" fill="#000"/>
<text transform="translate(72,523.5) rotate(-90)" font-size="11" text-anchor="middle" fill="#000" letter-spacing="-0.4">500</text>
<rect x="77" y="435.6" width="5" height="1" fill="#000"/>
<rect x="72.5" y="349.2" width="9.5" height="1.2" fill="#000"/>
<text transform="translate(72,350.8) rotate(-90)" font-size="11" text-anchor="middle" fill="#000" letter-spacing="-0.4">600</text>
<rect x="77" y="262.9" width="5" height="1" fill="#000"/>
<rect x="72.5" y="176.5" width="9.5" height="1.2" fill="#000"/>
<text transform="translate(72,178.1) rotate(-90)" font-size="11" text-anchor="middle" fill="#000" letter-spacing="-0.4">700</text>
<rect x="62" y="159" width="20" height="20" fill="#c0c0c0"/>
<path d="M70.700 162.500 L70.700 175 M63.700 168.600 L77 168.600" stroke="#000080" stroke-width="1.500"/><path d="M63.300 161.300 l4.300 0.400 l-3.900 3.900 z M79 177 l-4.600 -0.500 l4.100 -4.100 z" fill="#000080"/><path d="M64.800 162.800 L68.500 166.500 M73 171 L77.500 175.500" stroke="#000080" stroke-width="1.250"/><rect x="82" y="178" width="1282" height="1" fill="#d9d9d9"/><rect x="81" y="179" width="1" height="457" fill="#d9d9d9"/>
<path d="M492.8 388.0 L577.5 342.4 A8.64 8.64 0 0 0 580.9 330.3 L514.2 218.5 A8.64 8.64 0 0 0 504.0 214.7 L285.1 288.8 A8.64 8.64 0 0 0 281.4 302.8 L397.5 431.8 A8.64 8.64 0 0 0 408.0 433.6 Z" fill="none" stroke="#3434c8" stroke-width="1.3"/>
<path d="M507.8 222.2 L573.5 335.4 L404.7 425 L289.6 295.6 Z" fill="none" stroke="#e9e3b4" stroke-width="1.1"/>
<path d="M404.7 425 L573.5 335.4" fill="none" stroke="#ffffff" stroke-width="1.2"/>
<path d="M488.8 380.6 L601 610.5" stroke="#d84a40" stroke-width="1"/>
<circle cx="601" cy="610.5" r="2.4" fill="#000" stroke="#b9b9b9" stroke-width="0.9"/>
<path d="M485 377.500 L492.800 384 M485.500 384.500 L492.500 376.800" stroke="#3ec45a" stroke-width="1.5"/>
<path d="M514.500 358 L531.500 359 L521 367" fill="none" stroke="#e02828" stroke-width="2.2" stroke-linejoin="miter"/>
<path d="M121.500 508 L121.500 571.500 M128 577.500 L201.500 577.500" stroke="#d8d8d8" stroke-width="1"/><rect x="115.500" y="571.500" width="12" height="12" fill="none" stroke="#d8d8d8"/>
<path d="M106.500 508.500 L111 513 L115.500 508.500 M111 513 L111 518" fill="none" stroke="#c8c8c8" stroke-width="1"/>
<path d="M192 592.500 L201.500 600 M201.500 592.500 L192 600" fill="none" stroke="#c8c8c8" stroke-width="1"/>
</svg>
<div class="abs" style="left:0;top:636px;width:1366px;height:72px;background:#f0f0f0"></div>
<div class="abs" style="left:60px;top:637px;width:1306px;height:1px;background:#b4b4b4"></div>
<div class="abs" style="left:1364px;top:157px;width:2px;height:482px;background:#e9e9e9"></div>
<div id="cmd" class="abs">
 <div class="abs" style="left:1px;top:0;width:1px;height:63px;background:#555"></div>
 <div class="abs" style="left:0;top:40px;width:1286px;height:1px;background:#222"></div>
 <div class="abs" style="left:1087px;top:40px;width:1px;height:24px;background:#222"></div>
 <div class="cl" style="top:2px"><span class="jw" style="width:96px">请指定穿丝点</span><b>:554.000,448.569</b></div>
 <div class="cl" style="top:18px"><span class="jw" style="width:192px">选取轮廓上一点做为切入点</span><b>&nbsp;(X,Y)&nbsp;:488.694,582.287</b></div>
 <div class="cl" style="top:43px"><span class="jw" style="width:112px">请选中一个轨迹</span><b>:</b></div>
 <div class="abs" style="left:1111px;top:45px;font-size:16px;line-height:18px;color:#111;white-space:nowrap;letter-spacing:-0.5px">图层: 0</div>
</div>
<svg class="abs" style="left:1350px;top:646px" width="12" height="36" viewBox="0 0 12 36"><path d="M2.500 7.500 L6 3.500 L9.500 7.500 Z M2.500 27.500 L6 31.500 L9.500 27.500 Z" fill="#444"/></svg>
<div id="status" class="abs">
 <div class="abs" style="left:3px;top:3.500px;font-size:13px;font-weight:bold;line-height:16px;white-space:nowrap;color:#111;letter-spacing:-0.1px"><span style="color:#4a6491">AutoStudio</span> Software</div>
 <div class="abs" style="left:139px;top:3px;font-size:12px;line-height:16px;color:#555;white-space:nowrap">就绪</div>
 <div class="abs" style="left:1043px;top:3px;font-size:12px;line-height:16px;color:#14148c;white-space:nowrap">捕捉: no</div>
 <div class="abs" style="left:1171px;top:3px;font-size:12px;line-height:16px;color:#222;white-space:nowrap;letter-spacing:0.18px">(509.500 , 540.680)</div>
</div>
<div id="taskbar" class="abs">
 <div class="abs" style="left:0;top:0;width:1366px;height:39px;background:linear-gradient(90deg,#2a6797 0px,#2c6c9c 60px,#327399 118px,#3a7ba8 134px,#6fa3cf 141px,#a3c9ec 149px,#bad9f4 168px,#b8d8f5 230px,#b5d6f5 500px,#accef0 640px,#b5d8f7 760px,#a9caec 900px,#b1d2f2 1000px,#b3d5f4 1050px,#a6c5e4 1066px,#94b0cf 1080px,#8ca8c7 1092px,#8aa6c5 1200px,#88a3c1 1300px,#85a0be 1351px)"></div>
 <div class="abs" style="left:0;top:0;width:1366px;height:1px;background:rgba(40,60,90,.55)"></div>
 <div class="abs" style="left:0;top:1px;width:1366px;height:1px;background:rgba(255,255,255,.35)"></div>
<svg class="abs" style="left:0;top:0" width="1366" height="39" viewBox="0 729 1366 39" font-family="Liberation Sans, sans-serif">
<defs>
<radialGradient id="orb" cx="50%" cy="40%" r="60%"><stop offset="0" stop-color="#7fc0ee"/><stop offset=".55" stop-color="#2f7fc4"/><stop offset="1" stop-color="#123e74"/></radialGradient>
<linearGradient id="btn" x1="0" y1="0" x2="0" y2="1"><stop offset="0" stop-color="#ffffff" stop-opacity=".55"/><stop offset=".5" stop-color="#ffffff" stop-opacity=".28"/><stop offset="1" stop-color="#ffffff" stop-opacity=".18"/></linearGradient>
</defs>
<rect x="187.5" y="729.500" width="53" height="38" rx="2.500" fill="url(#btn)" stroke="#5f7f9f" stroke-width="1"/><rect x="181.5" y="729.500" width="54.0" height="38" rx="2.500" fill="url(#btn)" stroke="#587896" stroke-width="1"/><rect x="182.5" y="730.500" width="52.0" height="36" rx="2" fill="none" stroke="#ffffff" stroke-opacity=".55" stroke-width="1"/>
<rect x="305.5" y="729.500" width="59.0" height="38" rx="2.500" fill="url(#btn)" stroke="#587896" stroke-width="1"/><rect x="306.5" y="730.500" width="57.0" height="36" rx="2" fill="none" stroke="#ffffff" stroke-opacity=".55" stroke-width="1"/>
<rect x="373.5" y="729.500" width="53" height="38" rx="2.500" fill="url(#btn)" stroke="#5f7f9f" stroke-width="1"/><rect x="367.5" y="729.500" width="54.0" height="38" rx="2.500" fill="url(#btn)" stroke="#587896" stroke-width="1"/><rect x="368.5" y="730.500" width="52.0" height="36" rx="2" fill="none" stroke="#ffffff" stroke-opacity=".55" stroke-width="1"/>
<rect x="429.5" y="729.500" width="59.0" height="38" rx="2.500" fill="url(#btn)" stroke="#587896" stroke-width="1"/><rect x="430.5" y="730.500" width="57.0" height="36" rx="2" fill="none" stroke="#ffffff" stroke-opacity=".55" stroke-width="1"/>
<rect x="491.5" y="729.500" width="59.0" height="38" rx="2.500" fill="url(#btn)" stroke="#587896" stroke-width="1"/><rect x="492.5" y="730.500" width="57.0" height="36" rx="2" fill="none" stroke="#ffffff" stroke-opacity=".55" stroke-width="1"/>
<rect x="553.5" y="729.500" width="59.0" height="38" rx="2.500" fill="url(#btn)" stroke="#587896" stroke-width="1"/><rect x="554.5" y="730.500" width="57.0" height="36" rx="2" fill="none" stroke="#ffffff" stroke-opacity=".55" stroke-width="1"/>
<circle cx="27" cy="748.500" r="18.500" fill="#0f3a66" opacity=".55"/><circle cx="27" cy="748.500" r="17.500" fill="url(#orb)" stroke="#9fd0f2" stroke-width="1.200" stroke-opacity=".8"/>
<ellipse cx="27" cy="739.500" rx="13" ry="7.500" fill="#fff" opacity=".28"/><g transform="translate(26.500,748.500) scale(1.180) translate(-26.500,-748.500)"><path d="M18.500 741.500 C21.500 739.500 24 740.500 26 741.800 L24.800 747.500 C22.500 746 20 745.800 17.500 747.300 Z" fill="#e8572a"/><path d="M27.800 742 C30 743.500 33 743.500 35.800 741.800 L34.500 747.800 C32 749.300 29 749 26.500 747.800 Z" fill="#8cc63e"/><path d="M17 749.300 C19.500 747.800 22 748 24.300 749.500 L23 755.500 C21 754.200 18.500 754 15.800 755.500 Z" fill="#3d9be0"/><path d="M26 749.800 C28.500 751.300 31.500 751.300 34 749.800 L32.800 755.500 C30 757 27.500 756.800 24.800 755.500 Z" fill="#f8c52c"/></g><path d="M12 752 A16 16 0 0 0 42 752" fill="none" stroke="#bfe6ff" stroke-width="1.200" opacity=".5"/>
<g opacity=".95" transform="translate(83,748) scale(1.060,1.150) translate(-83,-748)"><path d="M71 752 a12 10.500 0 1 1 23.500 -2 l-17 0 a6 6 0 0 0 11.500 2.500 l5 0 a12 10.500 0 0 1 -23 -.5 z M77.500 746 l10.500 0 a5.500 5.500 0 0 0 -10.500 0 z" fill="#2b7de0" fill-rule="evenodd"/><path d="M69 760 C66 752 75 740 92 735 C97 733.500 99 735 97 738" fill="none" stroke="#4f9aee" stroke-width="2.500" opacity=".8"/><circle cx="106.500" cy="749" r="1.600" fill="#1d5fd0"/></g>
<g transform="translate(150,748) scale(1.050,1.120) translate(-150,-748)"><path d="M137.500 752 a12.500 11 0 1 1 24.500 -2 l-18 0 a6.500 6.500 0 0 0 12 2.500 l5.500 0 a12.500 11 0 0 1 -24 -.5 z M144.500 746 l11 0 a5.500 5.500 0 0 0 -11 0 z" fill="#3aa0e8" stroke="#e9f5fd" stroke-width=".8" fill-rule="evenodd"/><path d="M135.500 761 C131 753 141 740 157 734.500 C162 733 165 734.500 163 738.500" fill="none" stroke="#f0b82a" stroke-width="2.600"/></g>
<g><path d="M193 742 l0 -4.500 l9 0 l2 2 l15 0 l0 2.500 z" fill="#e8c860" stroke="#c9a23c" stroke-width=".7"/><rect x="194" y="735.500" width="2.500" height="2" fill="#3ba03b"/><rect x="204" y="737" width="2.500" height="2" fill="#c9403a"/><rect x="212" y="738" width="2.500" height="2" fill="#3ba03b"/><rect x="192.500" y="742" width="30" height="22" rx="1.500" fill="#f6dc86" stroke="#caa648" stroke-width=".8"/><rect x="192.500" y="742" width="30" height="8" fill="#fbeeb0" opacity=".8"/><path d="M196 766 l0 -10 l4 0 l0 -3 l15 0 l0 3 l4 0 l0 10 l-5 0 l0 -4 l-13 0 l0 4 z" fill="#8fc4ee" stroke="#5f9fd4" stroke-width=".8"/><rect x="201" y="753.500" width="13" height="3.500" fill="#d8ecfa"/></g>
<g><rect x="263.500" y="737.500" width="22" height="23" fill="#a9cdee" stroke="#7fb0dc" stroke-width=".8"/><rect x="260.500" y="736" width="22" height="24" fill="#b7d7f3" stroke="#86b6e2" stroke-width=".8"/><rect x="257.500" y="734.500" width="23" height="26" fill="#c6e0f7" stroke="#8dbbe4" stroke-width=".8"/><circle cx="269" cy="748" r="9.300" fill="#ee8420" stroke="#fad2a0" stroke-width="1.400"/><path d="M265.800 742.500 L274.500 748 L265.800 753.500 Z" fill="#fff"/></g>
<g><circle cx="335" cy="748.500" r="14.800" fill="#f4f8fc" stroke="#c0d4e8" stroke-width="1"/><circle cx="335" cy="748.500" r="12.600" fill="#3f8fdc"/><path d="M340 739.500 C334 737.500 328 740.500 329 745 C330 749 337 748.500 338.500 752 C340 755.500 335 758.500 329 756.500" fill="none" stroke="#fff" stroke-width="3.600" stroke-linecap="round"/></g>
<g transform="translate(394.500,748.200) scale(1.080,1.150) translate(-394.500,-748.200)"><path d="M378.500 748 L386 740 L403 740 L410 748 L403 756.500 L386 756.500 Z" fill="#fff" stroke="#111" stroke-width="1.200"/><path d="M378.500 748 L386 740 L390 744 L384 751 Z" fill="#3aa63a"/><path d="M386 756.500 L382 752 L387 747 L393 752 Z" fill="#2c6fd0"/><path d="M403 740 L410 748 L406 752 L399 744 Z" fill="#3aa63a"/><path d="M403 756.500 L396 756.500 L400 750 L406 752 Z" fill="#e8c83a"/><path d="M386 740 L392 740 L389 746 Z" fill="#e8c83a"/><path d="M384.500 754.500 L399 739.500 L406 742 L392 757.500 Z" fill="#ee2a1c" stroke="#111" stroke-width="1.200"/></g>
<g><rect x="443.500" y="736.500" width="31.500" height="21" fill="#3e8cd0" stroke="#2f6fae" stroke-width="1"/><rect x="444.500" y="737.500" width="29.500" height="19" fill="none" stroke="#6fb0e6" stroke-width=".8"/><circle cx="451.500" cy="743.500" r="4.300" fill="#f2a23a"/><path d="M451.500 743.500 L451.500 739.200 A4.300 4.300 0 0 1 455.800 743.500 Z" fill="#f1f1f1"/><circle cx="450" cy="752.500" r="1.500" fill="#7fd06a"/><circle cx="454" cy="752.500" r="1.500" fill="#7fd06a"/><rect x="459.500" y="740.500" width="11.500" height="4.200" fill="#cfe6f8" stroke="#eef6fc" stroke-width=".8"/><rect x="462" y="741.800" width="6" height="1.600" fill="#3e8cd0"/><rect x="459.500" y="748.500" width="11.500" height="4.200" fill="#cfe6f8" stroke="#eef6fc" stroke-width=".8"/><rect x="462" y="749.800" width="6" height="1.600" fill="#3e8cd0"/><ellipse cx="460" cy="759.800" rx="6.300" ry="3.900" fill="#e9e9ee" stroke="#a6a6b2" stroke-width=".8"/><path d="M455 758.500 C458 756.500 462 756.500 465 758.500" fill="none" stroke="#d08a8a" stroke-width=".8"/></g>
<g><path d="M513 736 L533.500 738 L534.500 762.500 L528 765 Z" fill="#f4f6f8" stroke="#b9c0c8" stroke-width=".8"/><path d="M510.500 737 L531 739 L528.500 763.500 L503 760 Z" fill="#9fc8dc" stroke="#7faac0" stroke-width=".8"/><path d="M511 737 L531 739" stroke="#555" stroke-width="1.500" stroke-dasharray="1 1.200"/><path d="M510 742 L524 744" stroke="#dff0f8" stroke-width="1"/></g>
<g><path d="M568.500 757 L578 752 L596 756 L596 761 L586 765.500 L568.500 761.500 Z" fill="#1646c0"/><path d="M568.500 755 L578 750 L596 754 L586 759 Z" fill="#2f6fe0"/><path d="M568.500 755 L568.500 761 L586 765.500 L586 759 Z" fill="#123a9c"/><path d="M575 751.500 L578 746 L592 735.500 L597 740.500 L583 752.500 Z" fill="#f4d82a" stroke="#b89a10" stroke-width=".8"/><path d="M592 735.500 L594.500 733.500 L599 738.500 L597 740.500 Z" fill="#f0a0a0" stroke="#b06060" stroke-width=".6"/><path d="M575 751.500 L578 746 L583 752.500 Z" fill="#f4e8c8"/><path d="M575 751.500 L576.500 749 L578 751.800 Z" fill="#222"/></g>
<g><rect x="1102.500" y="744.500" width="15.500" height="9.500" rx="1.200" fill="#cfd6e0" stroke="#eef2f7" stroke-width="1"/><path d="M1104.500 747.500 l11.500 0 M1104.500 750 l11.500 0 M1106 752.300 l8.500 0" stroke="#6a7d96" stroke-width="1" stroke-dasharray="1.300 .7"/><path d="M1105 743.500 C1108 739.500 1112 743.500 1116 739.800" fill="none" stroke="#d9e0ea" stroke-width="1"/></g>
<path d="M1128.500 741.500 l4.500 0 l0 3 l-4.500 0 z M1130 741 l0 -1.500 l4.500 0 l0 3 l-1.500 0" fill="none" stroke="#eef3fa" stroke-width=".9"/><path d="M1128.800 750 l4.400 0 l-2.200 2.800 z" fill="#eef3fa"/>
<path d="M1146.500 751.500 L1150.200 747 L1154 751.500 Z" fill="#f3f6fb"/>
<g><path d="M1167 745.500 l3 0 l5 -5 l0 15.500 l-5 -5 l-3 0 z" fill="#f0f2f6" stroke="#8b99ae" stroke-width=".8"/><path d="M1170 745.500 l0 5.500" stroke="#a9b4c4" stroke-width=".8"/><path d="M1177 743.500 c1.800 2.500 1.800 7 0 9.500" fill="none" stroke="#f0f2f6" stroke-width="1.100"/><circle cx="1180.500" cy="753" r="4.300" fill="#d9362b" stroke="#f6d2ce" stroke-width=".7"/><path d="M1178.600 751.100 l3.800 3.800 m0 -3.800 l-3.800 3.800" stroke="#fff" stroke-width="1.200"/></g>
<g><rect x="1196" y="743.500" width="11.500" height="9" fill="#4f627c" stroke="#f4f6fa" stroke-width="1.500"/><path d="M1197.500 757.300 l8.500 0 M1201.800 753.500 l0 3.500" stroke="#f4f6fa" stroke-width="1.500"/><path d="M1191.800 740 l0 4.500 l3 0 l0 -4.500 M1193.300 740 l0 -1.500 M1193.300 744.500 l0 9.500" fill="none" stroke="#f4f6fa" stroke-width="1.200"/></g>
<circle cx="1231" cy="749" r="10" fill="#25c04e" stroke="#6fe08c" stroke-width="1.800"/><text x="1231" y="753.500" font-family="Liberation Serif, serif" font-weight="bold" font-size="12.500" fill="#fff" text-anchor="middle">31</text>
<text x="1298.500" y="745" font-size="12.500" fill="#f6f9fd" text-anchor="middle" letter-spacing="0">17:26 周六</text><text x="1298.500" y="761.500" font-size="13" fill="#f6f9fd" text-anchor="middle" letter-spacing="0.1">2023/6/24</text>
<rect x="1351" y="729" width="1" height="39" fill="#5c7896"/><rect x="1352" y="729" width="13" height="39" fill="#9bb6d4"/><rect x="1355" y="731" width="8" height="16" fill="#7f9bb9" opacity=".6"/><rect x="1352" y="729" width="1" height="39" fill="#d6e6f5" opacity=".85"/><rect x="1364" y="729" width="1" height="39" fill="#c6d9ec" opacity=".8"/><rect x="1365" y="729" width="1" height="39" fill="#5c7896"/>
</svg>
</div>
<div id="dlg" class="abs">
<div class="abs" style="left:1px;top:1px;width:385px;height:26px;background:linear-gradient(#68abf3,#66a6ee)"></div>
<div class="abs" style="left:0;top:7px;width:356px;text-align:center;font-size:12px;line-height:18px;color:#15264e;white-space:nowrap;letter-spacing:0.15px"><span style="font-size:12.600px">GCode</span>代码输出</div>
<div class="abs" style="left:338px;top:1px;width:44px;height:18px;background:#c9514f"></div>
<svg class="abs" style="left:355px;top:5px" width="12" height="11" viewBox="0 0 12 11"><path d="M2 1.5 L10 9.500 M10 1.500 L2 9.500" stroke="#fff" stroke-width="1.7"/></svg>
<div id="dcl" class="abs" style="left:5px;top:27px;width:377px;height:455px;background:#f0f0f0">
 <div class="abs" style="left:0px;top:5px;width:369px;height:23px;border:1px solid #a9a9a9;border-top-color:#7a7a7a;background:#f2f2f2"></div>
 <div class="abs" style="left:6px;top:8px;font-size:12.500px;line-height:16px;color:#1e1e1e;white-space:nowrap;letter-spacing:0.15px">NC Code:</div>
 <svg class="abs" style="left:281px;top:8px" width="86" height="16" viewBox="937 167.500 86 16">
  <path d="M947 168.500 L947 182 M940.200 175.200 L953.800 175.200" stroke="#33b277" stroke-width="1.700"/>
  <path d="M962.500 168.800 L975.500 181.700 M975.500 168.800 L962.500 181.700" stroke="#cc2a14" stroke-width="2"/>
  <path d="M991 169.500 L991 182 M984.500 175.500 L991 169 L997.500 175.500" fill="none" stroke="#4c7db0" stroke-width="1.700"/>
  <path d="M1013 168.500 L1013 181 M1006.500 175 L1013 181.500 L1019.500 175" fill="none" stroke="#4c7db0" stroke-width="1.700"/>
 </svg>
 <div id="lb" class="abs" style="left:1px;top:28px;width:367px;height:397px;background:#fff;border:1px solid #3c3c3c;border-top-color:#8a8a8a">
  <div class="abs" style="left:0;top:0;width:365px;height:18px;border:1px dotted #000"></div>
  <div class="abs" style="left:2px;top:0;font-size:12px;line-height:18px;color:#1a1a1a;white-space:nowrap">
<div class="li">N100 G54&nbsp; G90 G92 X0.0 Y0.0 U0.0 V0.0</div>
<div class="li">(&nbsp;&nbsp; P000<span style="letter-spacing:1.150px">-------------------------</span> &nbsp; )</div>
<div class="li">N102&nbsp; G00&nbsp; X554.000&nbsp; Y448.569</div>
<div class="li">N103&nbsp; C0</div>
<div class="li">N104&nbsp; G01 X491.063&nbsp; Y577.884</div>
<div class="li">N105&nbsp; G01 X540.138&nbsp; Y604.290</div>
<div class="li">N106&nbsp; G03&nbsp; X542.064&nbsp; Y611.253&nbsp; R5.000</div>
<div class="li">N107&nbsp; G01 X503.477&nbsp; Y676.007</div>
<div class="li">N108&nbsp; G03&nbsp; X497.579&nbsp; Y678.184&nbsp; R5.000</div>
<div class="li">N109&nbsp; G01 X370.814&nbsp; Y635.286</div>
<div class="li">N110&nbsp; G03&nbsp; X368.700&nbsp; Y627.205&nbsp; R5.000</div>
<div class="li">N111&nbsp; G01 X435.902&nbsp; Y552.537</div>
<div class="li">N112&nbsp; G03&nbsp; X441.988&nbsp; Y551.479&nbsp; R5.000</div>
<div class="li">N113&nbsp; G01 X491.063&nbsp; Y577.884</div>
<div class="li">N114&nbsp; G00&nbsp; X554.000&nbsp; Y448.569</div>
  </div>
 </div>
 <div class="btn" style="left:32px;top:429px"><svg width="14" height="14" viewBox="0 0 14 14" style="position:absolute;left:8px;top:5px"><path d="M5 1 h4 v4 h4 v4 h-4 v4 h-4 v-4 h-4 v-4 h4 z" fill="#2a67c4" stroke="#1b458c" stroke-width=".8"/></svg><span style="left:31px">输出</span></div>
 <div class="btn" style="left:228px;top:429px"><svg width="14" height="14" viewBox="0 0 14 14" style="position:absolute;left:9px;top:5px"><path d="M1 5.200 h12 v3.600 h-12 z" fill="#2a67c4" stroke="#1b458c" stroke-width=".8"/></svg><span style="left:30px">取消</span></div>
</div>
</div>
</body>
</html>
